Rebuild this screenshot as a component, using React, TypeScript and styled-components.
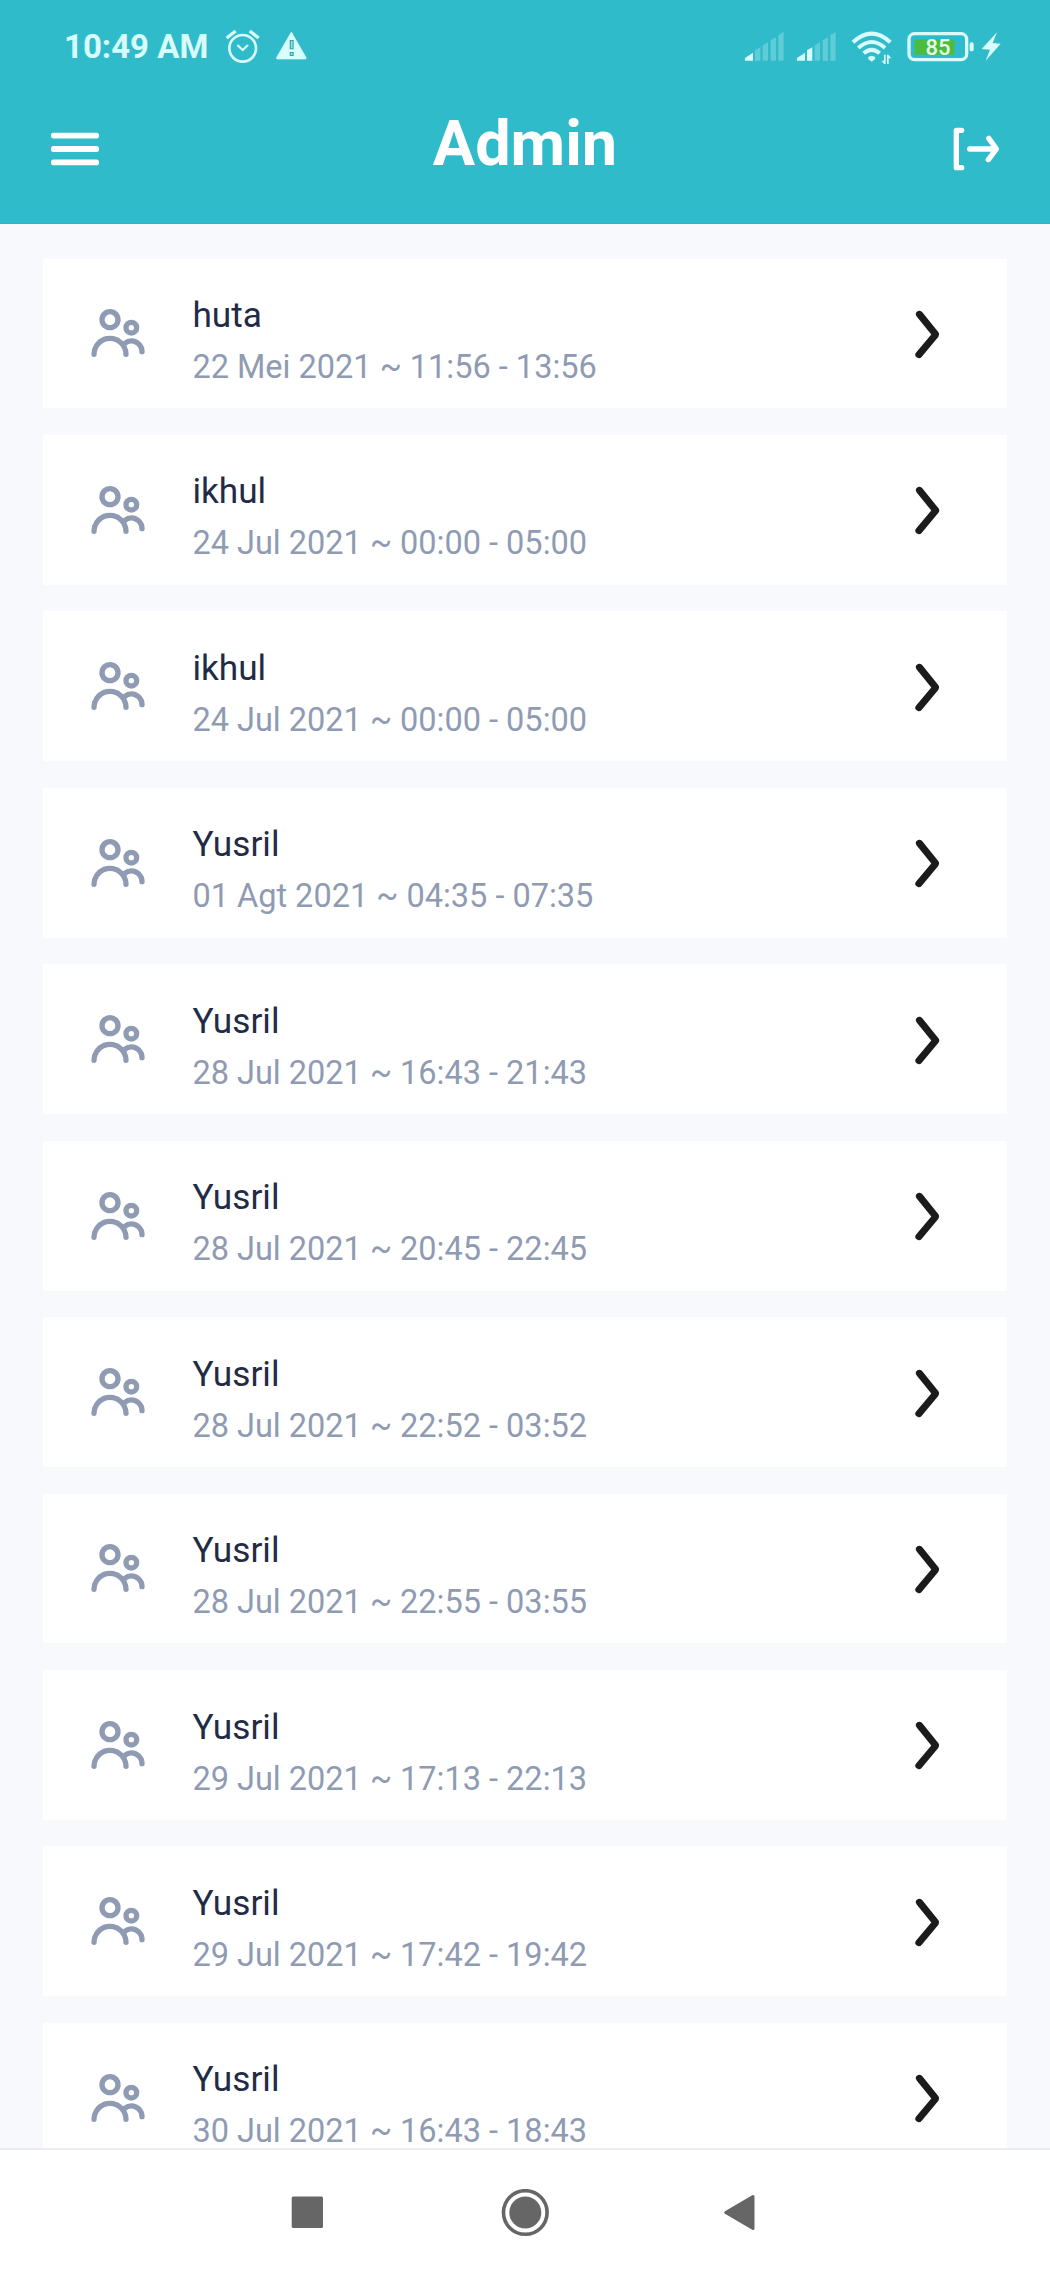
import React from "react";
import styled, { createGlobalStyle } from "styled-components";

const GlobalStyle = createGlobalStyle`
  *, *::before, *::after { box-sizing: border-box; }
  body { margin: 0; background: #f7f9fd; font-family: Roboto, "Liberation Sans", sans-serif; }
`;

const Screen = styled.div`
  display: flex;
  flex-direction: column;
  height: 2275px;
  width: 1050px;
  overflow: hidden;
  background: #f7f9fd;
`;

const Header = styled.header`
  flex: none;
  height: 224px;
  background: #30bbca;
  border-bottom: 1px solid #36b1be;
`;

const StatusBar = styled.div`
  display: flex;
  justify-content: space-between;
  height: 93px;
  padding: 27px 49px 0 64px;
  color: #d9fcfd;
`;

const StatusGroup = styled.div`
  display: flex;
  height: 40px;
`;

const Clock = styled.span`
  width: 160px;
  font-size: 33px;
  font-weight: 700;
  line-height: 40px;
  white-space: nowrap;
`;

const StatusIcon = styled.svg<{ $w: number; $gap?: number }>`
  flex: none;
  width: ${(p) => p.$w}px;
  height: 40px;
  margin-left: ${(p) => p.$gap ?? 0}px;
  fill: currentColor;
`;

const AppBar = styled.div`
  display: grid;
  grid-template-columns: 64px 1fr 64px;
  align-items: start;
  padding: 23.7px 43px 0;
  color: #fff;
`;

const Title = styled.h1`
  margin: -13px 0 0;
  font-size: 63px;
  font-weight: 700;
  line-height: 80px;
  text-align: center;
`;

const IconButton = styled.button`
  display: block;
  width: 64px;
  height: 64px;
  padding: 0;
  border: 0;
  background: none;
  color: inherit;
`;

const Glyph = styled.svg<{ $size: number }>`
  display: block;
  flex: none;
  width: ${(p) => p.$size}px;
  height: ${(p) => p.$size}px;
  fill: currentColor;
`;

const List = styled.main`
  flex: 1;
  min-height: 0;
  overflow: hidden;
  display: flex;
  flex-direction: column;
  gap: 26.6px;
  padding: 34.5px 43px 0;
`;

const Card = styled.article`
  flex: none;
  display: flex;
  align-items: center;
  height: 149.85px;
  padding: 0 41.3px 0 42.7px;
  background: #fff;
  color: #8f9bb3;
`;

const Details = styled.div`
  flex: 1;
  align-self: flex-start;
  padding: 34.5px 0 0 42.7px;
`;

const Name = styled.div`
  font-size: 35.2px;
  line-height: 44px;
  color: #222b45;
`;

const Schedule = styled.div`
  margin-top: 9px;
  font-size: 32.5px;
  line-height: 42px;
  white-space: nowrap;
`;

const Arrow = styled.span`
  flex: none;
  padding-top: 2px;
  color: #1c1a1c;
`;

const NavBar = styled.nav`
  flex: none;
  display: flex;
  align-items: center;
  justify-content: center;
  gap: 167px;
  height: 127px;
  border-top: 2px solid #ececec;
  background: #fff;
  color: #666;
`;

const bars = [
  "M0 101V93L24 77V101Z",
  "M30 101V70L46 61V101Z",
  "M53 101V55L69 46V101Z",
  "M77 101V40L93 31V101Z",
  "M100 101V24L116 15V101Z",
];

const Signal = ({ level, gap }: { level: number; gap?: number }) => (
  <StatusIcon $w={39} $gap={gap} viewBox="0 0 117 120">
    {bars.map((d, i) => (
      <path key={d} d={d} opacity={i < level ? 1 : 0.28} />
    ))}
  </StatusIcon>
);

const Alarm = () => (
  <StatusIcon $w={34} $gap={2} viewBox="0 0 102 120">
    <g fill="none" stroke="currentColor" strokeWidth="8">
      <circle cx="50" cy="64" r="40" />
      <path d="M34 54L50 69L66 54" strokeWidth="7" />
      <path d="M2 33L29 12M71 12L98 33" strokeWidth="10" />
    </g>
  </StatusIcon>
);

const Warning = () => (
  <StatusIcon $w={32} $gap={16} viewBox="0 0 96 120">
    <path d="M46 15L91 93L89 96H3L1 93Z" stroke="currentColor" strokeWidth="2" strokeLinejoin="round" />
    <path d="M41 39H53V67H41ZM41 75H53V87H41Z" fill="#30a5b2" />
    <path d="M44.500 42H49.500V64H44.500ZM44.500 78H49.500V84H44.500Z" fill="#9adfe5" />
  </StatusIcon>
);

const Wifi = () => (
  <StatusIcon $w={42} $gap={15} viewBox="0 0 126 120">
    <g fill="none" stroke="currentColor" strokeWidth="12">
      <path d="M6 46Q62 -6 118 46" />
      <path d="M22 63Q62 27 102 63" />
      <path d="M38 79Q62 58 86 79" />
    </g>
    <path d="M51 91Q62 81 73 91L71 97L62 104L53 97Z" />
    <path d="M99 83H104V111H99L92 101H99ZM108 111V83H112L121 94H113V111Z" />
  </StatusIcon>
);

const Battery = () => (
  <StatusIcon $w={67} $gap={14} viewBox="0 0 201 120">
    <rect x="6" y="20" width="173" height="78" rx="17" fill="none" stroke="currentColor" strokeWidth="10" />
    <rect x="23" y="37" width="119" height="46" fill="#4cbc3c" />
    <rect x="188" y="46" width="12" height="27" rx="5" />
    <text x="93" y="85" textAnchor="middle" fontFamily="Roboto, sans-serif" fontSize="66" fontWeight="500" fill="#e6fbe9">
      85
    </text>
  </StatusIcon>
);

const Bolt = () => (
  <StatusIcon $w={20} $gap={7} viewBox="0 0 60 120">
    <path d="M48 16L2 66L27 68L14 101L59 50L35 48Z" />
  </StatusIcon>
);

const PeopleIcon = () => (
  <Glyph $size={64} viewBox="0 0 24 24">
    <path d="M9 11a4 4 0 1 0-4-4 4 4 0 0 0 4 4zm0-6a2 2 0 1 1-2 2 2 2 0 0 1 2-2z" />
    <path d="M17 13a3 3 0 1 0-3-3 3 3 0 0 0 3 3zm0-4a1 1 0 1 1-1 1 1 1 0 0 1 1-1z" />
    <path d="M17 14a5 5 0 0 0-3.06 1.05A7 7 0 0 0 2 20a1 1 0 0 0 2 0 5 5 0 0 1 10 0 1 1 0 0 0 2 0 6.900 6.900 0 0 0-.86-3.350A3 3 0 0 1 20 19a1 1 0 0 0 2 0 5 5 0 0 0-5-5z" />
  </Glyph>
);

const sessions = [
  { name: "huta", when: "22 Mei 2021 ~ 11:56 - 13:56" },
  { name: "ikhul", when: "24 Jul 2021 ~ 00:00 - 05:00" },
  { name: "ikhul", when: "24 Jul 2021 ~ 00:00 - 05:00" },
  { name: "Yusril", when: "01 Agt 2021 ~ 04:35 - 07:35" },
  { name: "Yusril", when: "28 Jul 2021 ~ 16:43 - 21:43" },
  { name: "Yusril", when: "28 Jul 2021 ~ 20:45 - 22:45" },
  { name: "Yusril", when: "28 Jul 2021 ~ 22:52 - 03:52" },
  { name: "Yusril", when: "28 Jul 2021 ~ 22:55 - 03:55" },
  { name: "Yusril", when: "29 Jul 2021 ~ 17:13 - 22:13" },
  { name: "Yusril", when: "29 Jul 2021 ~ 17:42 - 19:42" },
  { name: "Yusril", when: "30 Jul 2021 ~ 16:43 - 18:43" },
];

export default function App() {
  return (
    <Screen>
      <GlobalStyle />
      <Header>
        <StatusBar>
          <StatusGroup>
            <Clock>10:49 AM</Clock>
            <Alarm />
            <Warning />
          </StatusGroup>
          <StatusGroup>
            <Signal level={1} />
            <Signal level={2} gap={13} />
            <Wifi />
            <Battery />
            <Bolt />
          </StatusGroup>
        </StatusBar>
        <AppBar>
          <IconButton aria-label="Menu">
            <Glyph $size={64} viewBox="0 0 24 24">
              <rect x="3" y="5.900" width="18" height="2.200" rx=".95" />
              <rect x="3" y="10.900" width="18" height="2.200" rx=".95" />
              <rect x="3" y="15.900" width="18" height="2.200" rx=".95" />
            </Glyph>
          </IconButton>
          <Title>Admin</Title>
          <IconButton aria-label="Log out">
            <Glyph $size={64} viewBox="0 0 24 24">
              <path d="M7 6a1 1 0 0 0 0-2H5a1 1 0 0 0-1 1v14a1 1 0 0 0 1 1h2a1 1 0 0 0 0-2H6V6z" />
              <path d="M20.820 11.420l-2.820-4a1 1 0 0 0-1.390-.24 1 1 0 0 0-.24 1.400L18.090 11H10a1 1 0 0 0 0 2h8l-1.800 2.400a1 1 0 0 0 .2 1.400 1 1 0 0 0 .6.2 1 1 0 0 0 .8-.4l3-4a1 1 0 0 0 .02-1.180z" />
            </Glyph>
          </IconButton>
        </AppBar>
      </Header>
      <List>
        {sessions.map((s, i) => (
          <Card key={i}>
            <PeopleIcon />
            <Details>
              <Name>{s.name}</Name>
              <Schedule>{s.when}</Schedule>
            </Details>
            <Arrow>
              <Glyph $size={81} viewBox="0 0 24 24">
                <path d="M10 19a1 1 0 0 1-.64-.23 1 1 0 0 1-.13-1.410L13.710 12 9.390 6.630a1 1 0 0 1 .15-1.410 1 1 0 0 1 1.460.15l4.830 6a1 1 0 0 1 0 1.270l-5 6A1 1 0 0 1 10 19z" />
              </Glyph>
            </Arrow>
          </Card>
        ))}
      </List>
      <NavBar>
        <Glyph $size={48} viewBox="0 0 48 48">
          <rect x="5.700" y="7.500" width="31.300" height="31.500" rx="1.500" />
        </Glyph>
        <Glyph $size={48} viewBox="0 0 48 48">
          <circle cx="24.300" cy="23.500" r="16" />
          <circle cx="24.300" cy="23.500" r="21.800" fill="none" stroke="currentColor" strokeWidth="3.600" />
        </Glyph>
        <Glyph $size={48} viewBox="0 0 48 48">
          <path d="M9.700 23.500L37 7.500V39.500Z" stroke="currentColor" strokeWidth="3" strokeLinejoin="round" />
        </Glyph>
      </NavBar>
    </Screen>
  );
}
